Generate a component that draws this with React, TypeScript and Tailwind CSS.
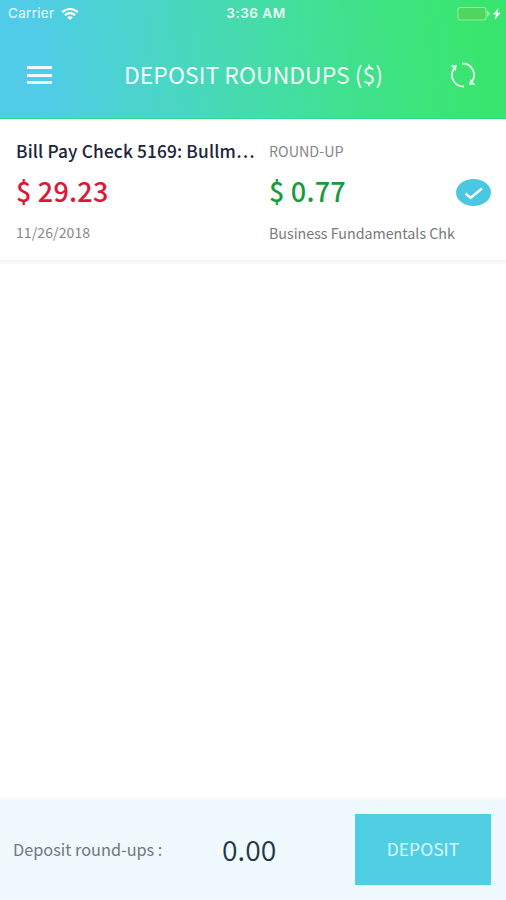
import React from "react";

function StatusBar() {
  return (
    <div className="flex h-[27px] items-center font-['Inter','Liberation_Sans',sans-serif] text-[13px] leading-[27px] text-white/90">
      <div className="flex w-[200px] items-center pl-2">
        <span className="w-[48px] whitespace-nowrap text-[13.5px] tracking-[0.3px]">Carrier</span>
        <svg className="ml-[5px]" width="18" height="14" viewBox="0 0 18 14" fill="none" stroke="white" strokeWidth="2.2">
          <path d="M1.2 5.2C5.5 .9 12.5 .9 16.8 5.2" />
          <path d="M4 8.2c2.8-2.7 7.2-2.7 10 0" />
          <path d="M6.2 10.2c1.6-1.4 4-1.4 5.6 0L9 13z" fill="white" stroke="none" />
        </svg>
      </div>
      <div className="w-[112px] whitespace-nowrap text-center text-[13.5px] font-semibold tracking-[0.5px]">3:36 AM</div>
      <div className="flex flex-1 justify-end pr-1">
        <svg width="46" height="16" viewBox="0 0 46 16">
          <rect x="2" y="1.5" width="28" height="12.5" rx="2.5" fill="#4fd65f" stroke="#8bed9f" strokeWidth="1.2" />
          <path d="M31 4.5l3.500 3.200-3.500 3.200z" fill="#8bed9f" />
          <path d="M42.500 2L37 8.500h3L38.800 14 44.500 6.800H41.300z" fill="white" />
        </svg>
      </div>
    </div>
  );
}

function Header() {
  return (
    <header className="h-[119px] border-b border-[#35d98a] bg-[linear-gradient(83deg,#50cce8_8%,#4ad5c6_32%,#43dea1_56%,#3de37f_78%,#3ae56f_93%)]">
      <StatusBar />
      <div className="flex h-[91px] items-center pt-[5px]">
        <div className="flex w-[124px] flex-col gap-[4.5px] pl-[27px]">
          <span className="h-[3px] w-[25px] bg-white/90" />
          <span className="h-[3px] w-[25px] bg-white/90" />
          <span className="h-[3px] w-[25px] bg-white/90" />
        </div>
        <h1 className="w-[325px] whitespace-nowrap pb-[3px] text-[23px] leading-[86px] text-white/95">DEPOSIT ROUNDUPS ($)</h1>
        <svg width="28" height="28" viewBox="0 0 28 28" fill="none" stroke="white" strokeOpacity="0.85" strokeWidth="1.9">
          <path d="M13 2.500A11.500 11.500 0 0 1 23 20.500" />
          <path d="M15 25.500A11.500 11.500 0 0 1 5 7.500" />
          <path d="M1.500 4.200h6.300l-1 5.800zM26.500 23.800h-6.300l1-5.800z" fill="white" fillOpacity="0.85" stroke="none" />
        </svg>
      </div>
    </header>
  );
}

function Transaction() {
  return (
    <section className="flex h-[141px] pl-4 pt-[18px]">
      <div className="w-[253px] whitespace-nowrap">
        <div className="h-7 text-[17.3px] font-medium leading-7 tracking-[0.15px] text-[#20243a]">Bill Pay Check 5169: Bullm…</div>
        <div className="h-[52px] text-[27px] font-medium leading-[52px] tracking-[0.2px] text-[#dc1738]">$ 29.23</div>
        <div className="h-[30px] text-[14px] leading-[30px] tracking-[0.1px] text-[#85878a]">11/26/2018</div>
      </div>
      <div className="w-[187px] whitespace-nowrap">
        <div className="h-7 text-[14.3px] leading-7 text-[#85878a]">ROUND-UP</div>
        <div className="h-[52px] text-[27px] font-medium leading-[52px] tracking-[0.2px] text-[#159c3d]">$ 0.77</div>
        <div className="h-[30px] text-[14.25px] leading-[32px] text-[#76797c]">Business Fundamentals Chk</div>
      </div>
      <svg className="mt-[42px]" width="35" height="27" viewBox="0 0 35 27">
        <ellipse cx="17.5" cy="13.5" rx="17.500" ry="13.500" fill="#4bc8e1" />
        <path d="M9.500 14.500l5 4.500L26 9.500" fill="none" stroke="white" strokeWidth="2.400" />
      </svg>
    </section>
  );
}

export default function App() {
  return (
    <div className="flex h-[900px] w-[506px] flex-col overflow-hidden bg-white font-['Noto_Sans_CJK_SC',sans-serif]">
      <Header />
      <Transaction />
      <div className="h-1 bg-linear-to-b from-[#f4f5f5] to-[#f9fafa]" />
      <main className="flex-1" />
      <footer className="flex h-[102px] items-center bg-[#f0f9fe] pl-[13px] pr-[15px]">
        <span className="w-[209px] whitespace-nowrap pt-px text-[16.3px] text-[#70787c]">Deposit round-ups :</span>
        <span className="w-[133px] pt-px text-[28.3px] font-[350] text-[#24364a]">0.00</span>
        <button className="h-[71px] w-[136px] bg-[#50cfe4] text-[17.5px] text-[#dcf9fc]">DEPOSIT</button>
      </footer>
    </div>
  );
}
